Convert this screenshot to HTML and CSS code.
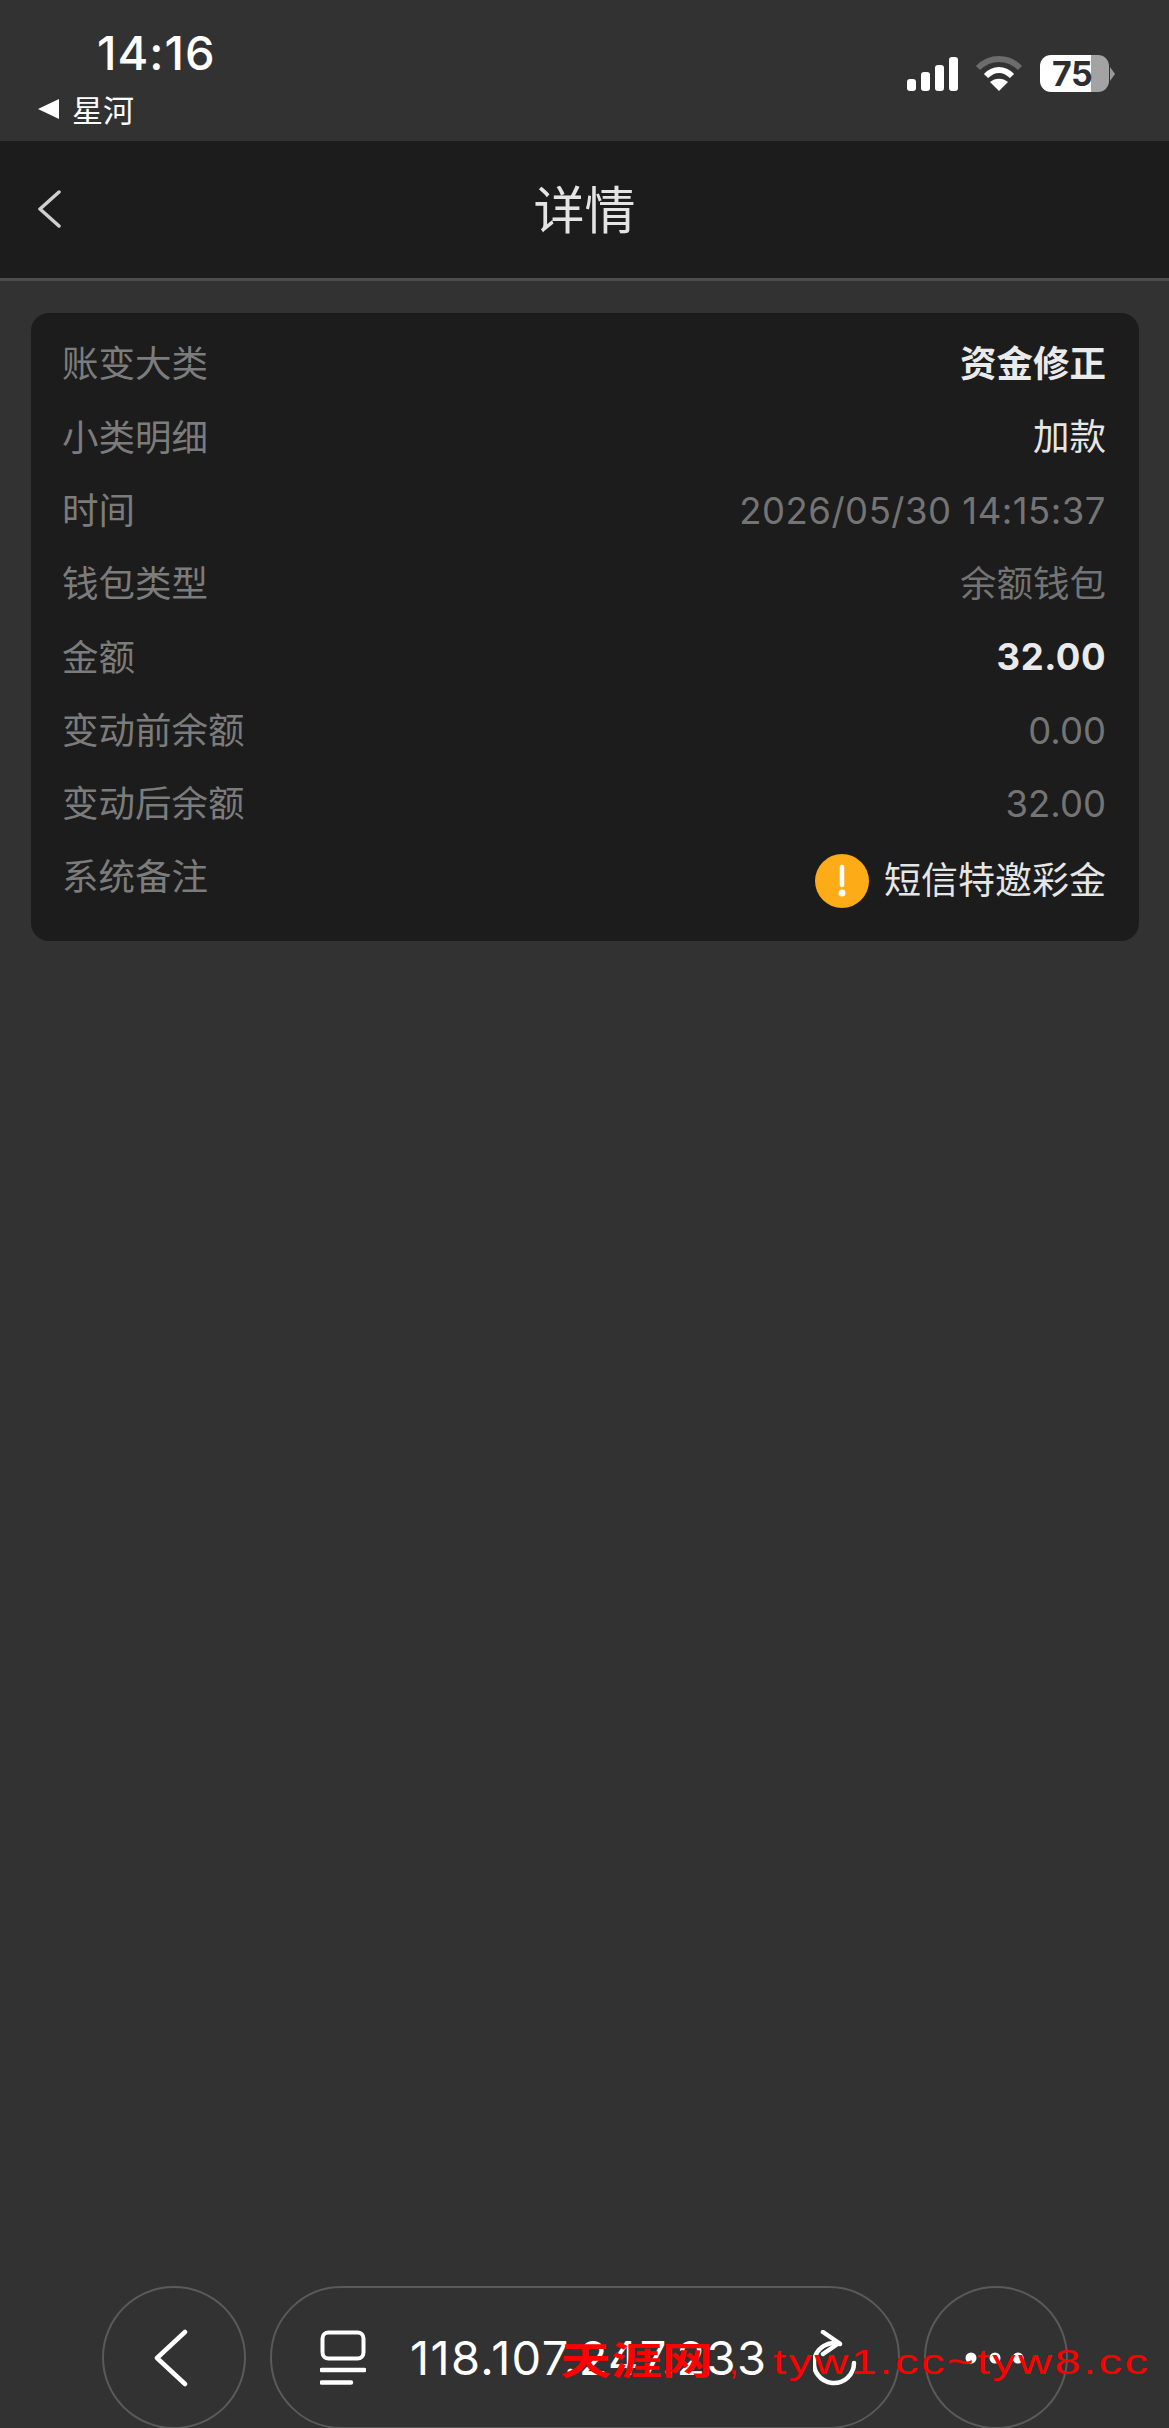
FILE: index.html
```html
<!DOCTYPE html>
<html lang="zh-CN">
<head>
<meta charset="utf-8">
<title>详情</title>
<link rel="stylesheet" href="styles.css">
</head>
<body>
<div class="page">
  <div class="status">
    <div class="status-left">
      <div class="time">14:16</div>
      <div class="from"><span class="tri"></span><span>星河</span></div>
    </div>
    <div class="status-right">
      <svg class="signal" width="51" height="34" viewBox="0 0 51 34"><rect x="0" y="22" width="9" height="12" rx="3"/><rect x="14" y="15" width="9" height="19" rx="3"/><rect x="28" y="8" width="9" height="26" rx="3"/><rect x="42" y="0" width="9" height="34" rx="3"/></svg>
      <svg class="wifi" width="48" height="37" viewBox="0 0 48 37"><path d="M3 13C15 1 33 1 45 13" fill="none" stroke="#6c6c6c" stroke-width="6"/><path d="M11 21C19 13 29 13 37 21" fill="none" stroke="#fff" stroke-width="6"/><path d="M24 36L15 27C20 22.500 28 22.500 33 27Z" fill="#fff"/></svg>
      <div class="battery"><div class="bat-body"><span class="bat-num">75</span></div><span class="bat-tip"></span></div>
    </div>
  </div>
  <header class="nav">
    <svg class="nav-back" width="24" height="38" viewBox="0 0 24 38"><path d="M22 2L3 19L22 36" fill="none" stroke="#cfcfcf" stroke-width="3.500" stroke-linecap="round" stroke-linejoin="round"/></svg>
    <h1 class="nav-title">详情</h1>
  </header>
  <main class="content">
    <section class="card">
      <div class="row"><span class="label">账变大类</span><span class="val strong">资金修正</span></div>
      <div class="row"><span class="label">小类明细</span><span class="val light">加款</span></div>
      <div class="row"><span class="label">时间</span><span class="val dim date">2026/05/30 14:15:37</span></div>
      <div class="row"><span class="label">钱包类型</span><span class="val dim">余额钱包</span></div>
      <div class="row"><span class="label">金额</span><span class="val strong num">32.00</span></div>
      <div class="row"><span class="label">变动前余额</span><span class="val dim">0.00</span></div>
      <div class="row"><span class="label">变动后余额</span><span class="val dim">32.00</span></div>
      <div class="row last"><span class="label">系统备注</span>
        <span class="note"><svg class="warn" width="54" height="54" viewBox="0 0 54 54"><circle cx="27" cy="27" r="27" fill="#fdab16"/><path d="M27 13V31" stroke="#fff" stroke-width="4.500" stroke-linecap="round"/><circle cx="27" cy="39" r="3.500" fill="#fff"/></svg><span class="val light note-text">短信特邀彩金</span></span>
      </div>
    </section>
  </main>
  <nav class="bar">
    <div class="circle">
      <svg class="bar-back" width="36" height="58" viewBox="0 0 36 58"><path d="M32 3L4 29L32 55" fill="none" stroke="#fff" stroke-width="4.500" stroke-linecap="round" stroke-linejoin="round"/></svg>
    </div>
    <div class="pill">
      <svg class="tabs" width="46" height="56" viewBox="0 0 46 56"><rect x="2.500" y="2.500" width="41" height="26" rx="6" fill="none" stroke="#fff" stroke-width="4"/><path d="M1.500 40H44.500" stroke="#fff" stroke-width="4.500" stroke-linecap="round"/><path d="M1.500 52.500H31" stroke="#fff" stroke-width="4.500" stroke-linecap="round"/></svg>
      <span class="url">118.107.247.233</span>
      <svg class="reload" width="44" height="56" viewBox="0 0 44 56"><path d="M27 14A20 20 0 1 0 41 33" fill="none" stroke="#fff" stroke-width="4.500" stroke-linecap="round"/><path d="M10 2L26 13L10 24" fill="none" stroke="#fff" stroke-width="4.500" stroke-linecap="round" stroke-linejoin="round"/></svg>
    </div>
    <div class="circle">
      <svg class="dots" width="60" height="12" viewBox="0 0 60 12"><circle cx="6" cy="6" r="5.500" fill="#fff"/><circle cx="30" cy="6" r="5.500" fill="#fff"/><circle cx="53" cy="6" r="5.500" fill="#fff"/></svg>
    </div>
  </nav>
  <div class="mark"><span class="mark-cn">天涯网</span><span class="mark-sep">,</span><span class="mark-en">tyw1.cc~tyw8.cc</span></div>
</div>
</body>
</html>
```
FILE: styles.css
```css
* { box-sizing: border-box; }
html, body { margin: 0; padding: 0; }
body { background: #323232; font-family: Inter, "Noto Sans CJK SC", sans-serif; color: #e6e6e6; }
.page { position: relative; width: 1169px; height: 2428px; overflow: hidden; display: flex; flex-direction: column; background: #323232; }

.status { height: 141px; display: flex; justify-content: space-between; padding: 0 54px 0 38px; }
.status-left { padding-top: 24px; }
.time { margin-left: 59px; font-size: 47px; font-weight: 500; line-height: 58px; color: #fff; letter-spacing: 1px; white-space: nowrap; }
.from { display: flex; align-items: center; gap: 13px; margin-top: 8px; font-size: 31px; line-height: 38px; color: #fff; font-family: "Noto Sans CJK SC", sans-serif; }
.tri { width: 0; height: 0; border-style: solid; border-width: 10px 21px 10px 0; border-color: transparent #fff transparent transparent; }
.status-right { display: flex; align-items: flex-start; padding-top: 55px; gap: 17px; }
.signal { margin-top: 2px; fill: #fff; }
.battery { display: flex; align-items: center; }
.bat-body { width: 69px; height: 37px; border-radius: 11px; background: linear-gradient(90deg, #fff 0, #fff 51px, #a3a3a3 51px, #a3a3a3 100%); display: flex; align-items: center; padding-left: 12px; }
.bat-num { font-size: 34px; font-weight: 700; color: #2e2e2e; line-height: 37px; letter-spacing: -0.5px; }
.bat-tip { width: 0; height: 0; border-style: solid; border-width: 7px 0 7px 5px; border-color: transparent transparent transparent #9a9a9a; margin-left: 1px; }

.nav { position: relative; height: 140px; background: #1c1c1c; border-bottom: 3px solid #4c4c4c; display: flex; align-items: center; justify-content: center; }
.nav-back { position: absolute; left: 37px; top: 49px; }
.nav-title { margin: -6px 0 0; font-size: 51px; font-weight: 400; line-height: 60px; color: #e4e4e4; font-family: "Noto Sans CJK SC", sans-serif; }

.content { flex: 1; padding: 32px 30px 0 31px; }
.card { background: #1c1c1c; border-radius: 18px; padding: 14.500px 33px 30px 31px; }
.row { display: flex; justify-content: space-between; align-items: center; height: 73.330px; font-size: 36.500px; }
.label { color: #7c7c7c; font-weight: 400; font-family: "Noto Sans CJK SC", sans-serif; line-height: 73px; white-space: nowrap; margin-top: -4.500px; }
.val { line-height: 54px; white-space: nowrap; }
.strong { color: #eaeaea; font-weight: 700; }
.light { color: #e6e6e6; font-weight: 400; }
.dim { color: #747474; font-weight: 400; }
.date { letter-spacing: 0.5px; }
.num { letter-spacing: 0.5px; }
.row.last { align-items: flex-start; height: auto; }
.row.last .label { margin-top: -3px; }
.note { display: flex; align-items: center; gap: 15px; margin-top: 13px; }
.note-text { font-size: 37px; }
.warn { flex: none; }

.bar { display: flex; gap: 24px; padding-left: 102px; height: 142px; }
.circle { width: 144px; height: 143px; border: 2px solid #5a5a5a; border-radius: 50%; display: flex; align-items: center; justify-content: center; flex: none; }
.bar-back { margin-right: 6px; }
.dots { margin-right: 2px; }
.pill { width: 630px; height: 143px; border: 2px solid #5a5a5a; border-radius: 72px; display: flex; align-items: center; padding-left: 48px; flex: none; }
.tabs { flex: none; }
.url { margin-left: 44px; font-size: 47px; font-weight: 400; color: #fff; white-space: nowrap; letter-spacing: 1.350px; }
.reload { margin-left: 46px; flex: none; }

.mark { position: absolute; left: 560px; top: 2330px; display: flex; align-items: baseline; color: #f00; white-space: nowrap; font-family: "Liberation Sans", "Noto Sans CJK SC", sans-serif; }
.mark-cn { display: inline-block; font-size: 38px; font-weight: 700; width: 153px; transform: scaleX(1.34); transform-origin: left center; font-family: "Noto Sans CJK SC", sans-serif; }
.mark-sep { font-size: 33px; margin-left: 16px; width: 44px; }
.mark-en { display: inline-block; font-size: 35px; letter-spacing: 2px; transform: scaleX(1.33); transform-origin: left center; }
```
